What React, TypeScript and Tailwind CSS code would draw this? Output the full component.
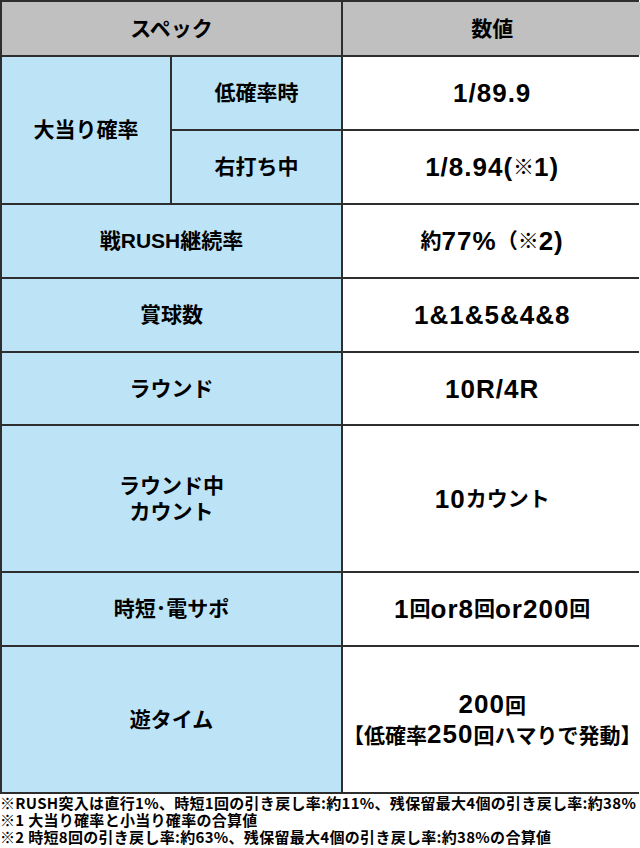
import React from "react";

const JP = "font-['Liberation_Sans','Noto_Sans_CJK_JP',sans-serif]";
const NUM = "text-[26px] tracking-[1px]";

function Cell({
  children,
  className = "",
}: {
  children: React.ReactNode;
  className?: string;
}) {
  return (
    <div
      className={`flex items-center justify-center text-center font-bold text-black leading-[26px] ${className}`}
    >
      {children}
    </div>
  );
}

export default function App() {
  const label = "bg-[#bde3f7] text-[21px] col-span-2";
  const val = "bg-white text-[21px]";
  return (
    <div className={`w-[640px] h-[848px] bg-white ${JP}`}>
      <div className="w-[639px] grid grid-cols-[168px_169px_1fr] grid-rows-[53px_72px_72px_72px_72px_71px_145px_72px_145px] gap-[2px] p-[2px] bg-[#2e2e2e]">
        <Cell className="bg-[#c0c0c0] text-[21px] col-span-2">スペック</Cell>
        <Cell className="bg-[#c0c0c0] text-[21px]">数値</Cell>

        <Cell className="bg-[#bde3f7] text-[21px] row-span-2">大当り確率</Cell>
        <Cell className="bg-[#bde3f7] text-[21px]">低確率時</Cell>
        <Cell className={val}>
          <span className={NUM}>1/89.9</span>
        </Cell>
        <Cell className="bg-[#bde3f7] text-[21px]">右打ち中</Cell>
        <Cell className={val}>
          <span className={NUM}>1/8.94(</span>
          <span className="text-[21px]">※</span>
          <span className={NUM}>1)</span>
        </Cell>

        <Cell className={label}>戦RUSH継続率</Cell>
        <Cell className={val}>
          <span>約</span>
          <span className={NUM}>77%</span>
          <span>（※</span>
          <span className={NUM}>2)</span>
        </Cell>

        <Cell className={label}>賞球数</Cell>
        <Cell className={val}>
          <span className={NUM}>1&amp;1&amp;5&amp;4&amp;8</span>
        </Cell>

        <Cell className={label}>ラウンド</Cell>
        <Cell className={val}>
          <span className={NUM}>10R/4R</span>
        </Cell>

        <Cell className={label}>
          <div>
            ラウンド中
            <br />
            カウント
          </div>
        </Cell>
        <Cell className={val}>
          <span className={NUM}>10</span>
          <span>カウント</span>
        </Cell>

        <Cell className={label}>時短･電サポ</Cell>
        <Cell className={val}>
          <span className={NUM}>1</span>
          <span>回</span>
          <span className={NUM}>or8</span>
          <span>回</span>
          <span className={NUM}>or200</span>
          <span>回</span>
        </Cell>

        <Cell className={label}>遊タイム</Cell>
        <Cell className={val}>
          <div className="flex flex-col items-center leading-[28px]">
            <div>
              <span className={NUM}>200</span>
              <span>回</span>
            </div>
            <div className="whitespace-nowrap">
              <span>【低確率</span>
              <span className={NUM}>250</span>
              <span>回ハマりで発動】</span>
            </div>
          </div>
        </Cell>
      </div>
      <div className="text-[15px] leading-[17px] tracking-[0.3px] font-bold text-black whitespace-nowrap font-['Noto_Sans_CJK_JP',sans-serif]">
        <div>※RUSH突入は直行1%、時短1回の引き戻し率:約11%、残保留最大4個の引き戻し率:約38%</div>
        <div>※1 大当り確率と小当り確率の合算値</div>
        <div>※2 時短8回の引き戻し率:約63%、残保留最大4個の引き戻し率:約38%の合算値</div>
      </div>
    </div>
  );
}
